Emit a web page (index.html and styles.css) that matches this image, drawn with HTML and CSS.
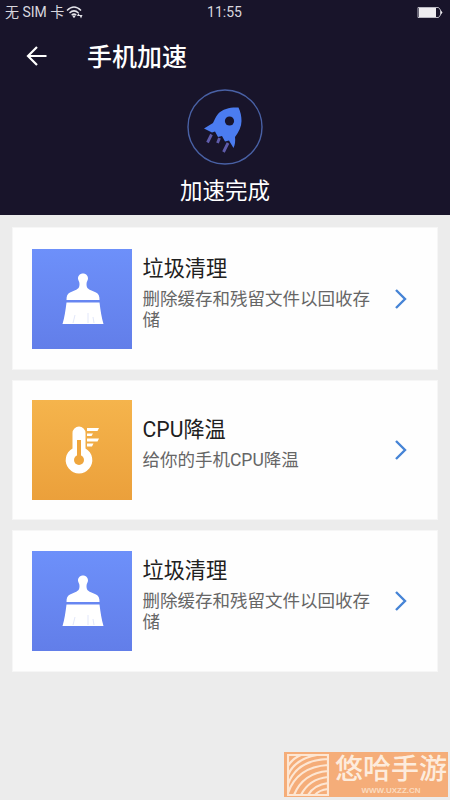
FILE: index.html
```html
<!DOCTYPE html>
<html lang="zh-CN">
<head>
<meta charset="utf-8">
<title>手机加速</title>
<link rel="stylesheet" href="styles.css">
</head>
<body>
<svg class="defs" aria-hidden="true">
  <symbol id="brush" viewBox="0 0 100 100">
    <path fill="#fff" d="M51 24.500c3 0 5 2.200 5 5 0 2-1.500 3-1.500 5.500 0 4 1.500 5 5 6.500l4.500 2c3 1.500 3.500 4 3.500 7.500H34.500c0-3.500.5-6 3.500-7.500l4.500-2c3.500-1.500 5-2.500 5-6.500 0-2.500-1.500-3.500-1.500-5.500 0-2.800 2-5 5-5zM34.500 53.500h33c1 8 2 15 4 21.500h-41c2-6.500 3-13.500 4-21.500z"/>
    <path stroke="#e2e7fa" stroke-width="1" d="M43 66l-2 8M56 64v10M61 68l1 6"/>
  </symbol>
</svg>
<header class="hero">
  <div class="status">
    <div class="carrier"><span>无 SIM 卡</span>
      <svg width="18" height="14" viewBox="0 0 18 14" fill="none" stroke="#e4e3e9" stroke-width="1.500"><path d="M1 5.500Q8-1.500 15 5.500M3.500 8Q8 3.800 12.500 8M5.700 10.200Q8 8 10.300 10.200"/><path fill="#e4e3e9" stroke="none" d="M6.500 11.500L8 10l1.500 1.500L8 13zM11 11l1.500-3 1.500 3zM13.500 10h3L15 13.500z"/></svg>
    </div>
    <div class="clock">11:55</div>
    <svg class="battery" width="27" height="13" viewBox="0 0 27 13"><path fill="none" stroke="#b9b8c2" d="M1 1.500h20.500l2 2.500v5l-2 2.500H1z"/><path fill="#eeedf0" d="M2 2h17v9H2zM24 4.500l1.500 2-1.500 2z"/></svg>
  </div>
  <div class="bar">
    <svg width="22" height="22" viewBox="0 0 22 22" fill="none" stroke="#fff" stroke-width="2.200"><path d="M20.500 11H2M11 2l-9 9 9 9"/></svg>
    <h1>手机加速</h1>
  </div>
  <svg class="rocket" width="76" height="76" viewBox="0 0 76 76">
    <circle cx="38" cy="38" r="37" fill="none" stroke="#4961a5" stroke-width="1.400"/>
    <path fill="#4b7cf0" d="M51.500 18.500C45 18 36 19 31 25c-2.500 3-3.500 6-5 9l-9 5.500 8 4 3-1 3 5.500 4-1 3 5.500 4-1 4.500 7.500c1.500-3 2-7 1.500-11 4-5 6.500-11 6.500-16 0-5-1-9-3-13.500z"/>
    <circle cx="42.500" cy="32" r="4.600" fill="#18142c"/>
    <path stroke="#5f5cab" stroke-width="2.800" d="M24.500 45.500l-4 8M32.500 49l-2 5M41 54l-4.500 9"/>
  </svg>
  <p>加速完成</p>
</header>
<main>
  <article class="card first">
    <svg class="tile blue" viewBox="0 0 100 100"><use href="#brush"/></svg>
    <div class="copy"><h2>垃圾清理</h2><p>删除缓存和残留文件以回收存储</p></div>
    <svg class="chevron" viewBox="0 0 14 20"><path d="M2 1l9 9-9 9"/></svg>
  </article>
  <article class="card middle">
    <svg class="tile orange" viewBox="0 0 100 100">
      <path fill="#fff" d="M40.500 33a6.500 6.500 0 0 1 13 0v15.500a13.300 13.300 0 1 1-13 0z"/>
      <path stroke="#efa63d" stroke-width="4" d="M47 40v22"/><circle cx="47" cy="60" r="5" fill="#efa63d"/>
      <path fill="#fff" d="M55 28h12l-1.500 3H55zM55 33.500h6L59.500 36H55zM55 38.500h12l-1.500 3H55zM55 43.500h6.500L60 46.500h-5z"/>
    </svg>
    <div class="copy"><h2>CPU降温</h2><p>给你的手机CPU降温</p></div>
    <svg class="chevron" viewBox="0 0 14 20"><path d="M2 1l9 9-9 9"/></svg>
  </article>
  <article class="card last">
    <svg class="tile blue" viewBox="0 0 100 100"><use href="#brush"/></svg>
    <div class="copy"><h2>垃圾清理</h2><p>删除缓存和残留文件以回收存储</p></div>
    <svg class="chevron" viewBox="0 0 14 20"><path d="M2 1l9 9-9 9"/></svg>
  </article>
</main>
<aside class="watermark">
  <svg width="42" height="42" viewBox="0 0 42 42" fill="none" stroke="#fde6d3" stroke-width="2.200"><path d="M1 1h40v40H1zM1 12Q6 4 14 1M1 21Q8 5 30 1M1 30Q10 6 41 5M1 39Q10 13 41 11M7 41Q16 19 41 17M14 41Q22 25 41 23M21 41Q27 31 41 29M28 41Q32 36 41 35"/></svg>
  <div class="brand"><strong>悠哈手游</strong><small>WWW.UXZZ.CN</small></div>
</aside>
</body>
</html>
```
FILE: styles.css
```css
* { box-sizing: border-box; }
body {
  margin: 0;
  height: 800px;
  overflow: hidden;
  background: #ececec;
  font-family: Roboto, "Noto Sans CJK SC", sans-serif;
}
h1, h2, p { margin: 0; font-weight: 400; }
svg { display: block; flex: none; }
.defs { position: absolute; width: 0; height: 0; }

.hero {
  height: 215px;
  background: #18142a;
  color: #fff;
  display: flex;
  flex-direction: column;
}
.status {
  height: 24px;
  padding: 0 6px 0 5px;
  display: grid;
  grid-template-columns: 1fr auto 1fr;
  align-items: center;
  font-size: 14px;
  line-height: 24px;
  color: #d8d7df;
}
.carrier { display: flex; align-items: center; gap: 2px; white-space: nowrap; }
.battery { justify-self: end; }
.bar {
  height: 64px;
  padding-left: 26px;
  display: flex;
  align-items: center;
  gap: 39px;
}
.bar h1 { font-size: 25px; font-weight: 500; line-height: 36px; padding-top: 4px; }
.rocket { margin: 1px auto 0 187px; }
.hero > p { text-align: center; font-size: 22.5px; line-height: 30px; margin-top: 11px; }

main {
  padding: 12px 12px 0 11.5px;
  display: flex;
  flex-direction: column;
  gap: 10px;
}
.card {
  height: 142px;
  padding: 0 29px 0 19.8px;
  background: #fefefe;
  border: 1px solid #f6f6f6;
  display: flex;
  align-items: center;
}
.first { height: 143px; }
.middle { height: 140px; }
.tile { width: 100px; height: 100px; }
.blue { background: linear-gradient(#6d90fa, #627ee9); }
.orange { background: linear-gradient(#f5b44c, #eba03b); }
.copy { flex: 1; padding: 0 0 14px 10.2px; }
.copy h2 { font-size: 21.200px; line-height: 31px; color: #202020; }
.copy p { width: 236px; margin-top: 5px; font-size: 17.500px; line-height: 20.500px; color: #666; }
.middle .copy { padding-bottom: 16px; }
.last .copy { padding-bottom: 15px; }
.chevron { width: 14px; height: 20px; fill: none; stroke: #4684d6; stroke-width: 2.400; }

.watermark {
  position: absolute;
  left: 284px;
  top: 752px;
  width: 164px;
  height: 45px;
  padding: 0 1px 0 3px;
  background: #f5ad79;
  color: #fdecdd;
  display: flex;
  align-items: center;
  gap: 6px;
}
.brand { display: flex; flex-direction: column; align-items: center; }
.brand strong { font: 500 28px/33px "Liberation Serif", "Noto Sans CJK SC", serif; white-space: nowrap; }
.brand small { font: 700 8px/10px "Liberation Sans", sans-serif; color: #fbdcc0; }
```
